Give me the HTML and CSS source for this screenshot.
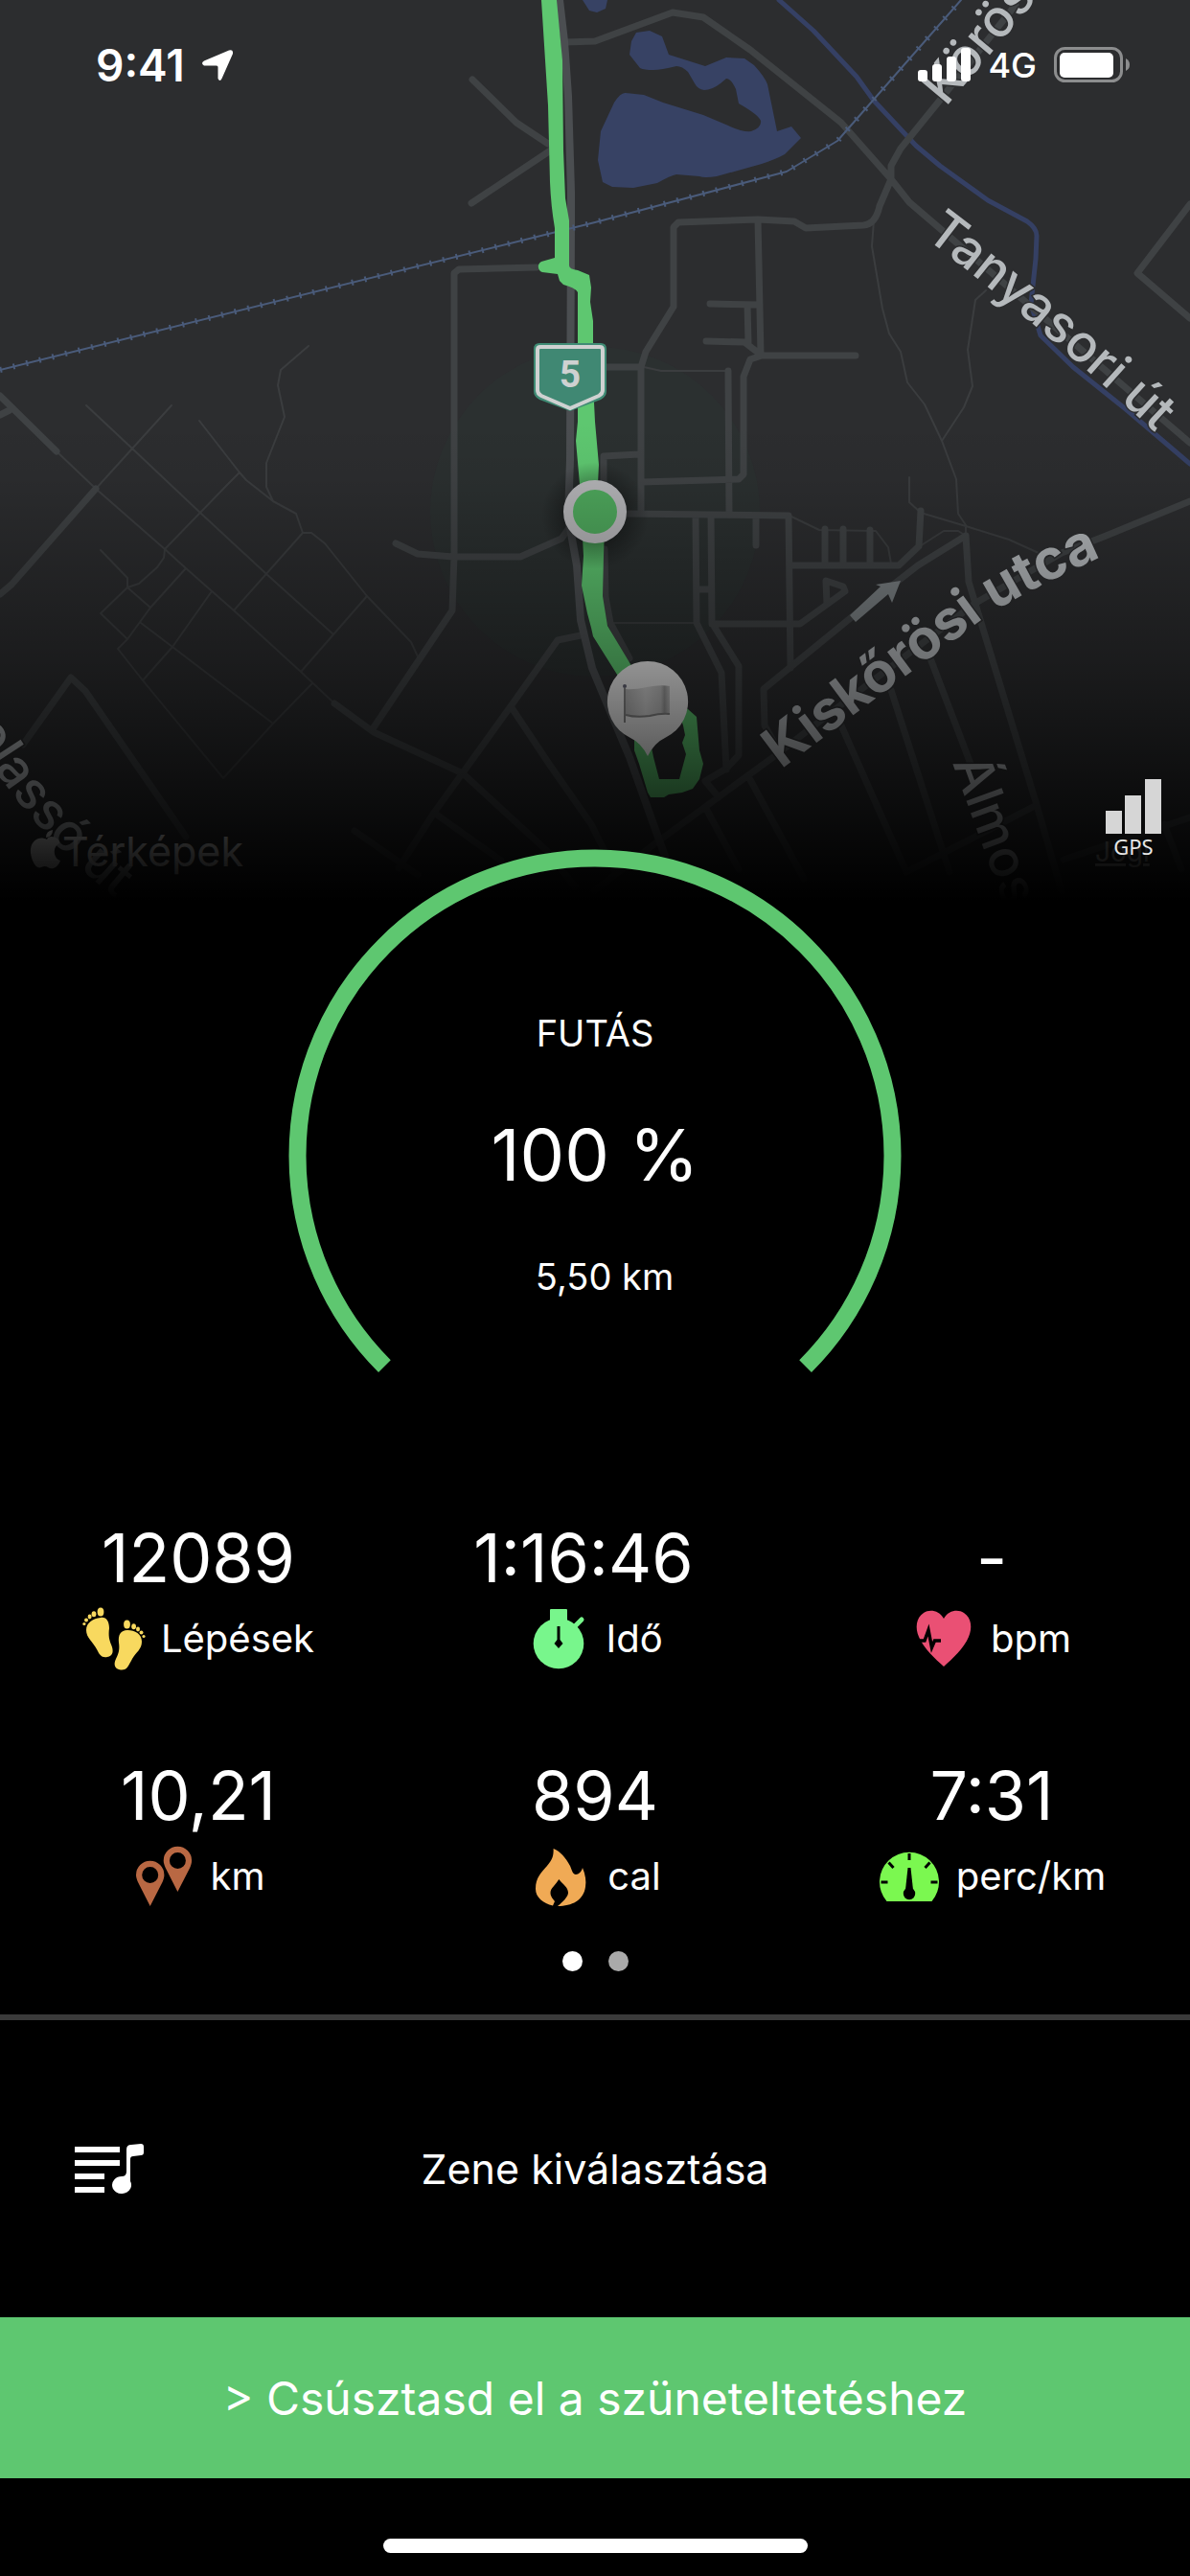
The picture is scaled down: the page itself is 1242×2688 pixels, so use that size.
FILE: index.html
```html
<!DOCTYPE html>
<html lang="hu">
<head>
	<meta charset="utf-8">
	<meta name="viewport" content="width=device-width, initial-scale=1">
	<title>Futás</title>
	<link rel="stylesheet" href="styles.css">
</head>
<body>
	<header class="map">
		<svg class="map-canvas" viewBox="0 0 1242 946" aria-hidden="true">
			<defs>
				<linearGradient id="fade" gradientUnits="userSpaceOnUse" x1="0" y1="440" x2="0" y2="940">
					<stop offset="0" stop-color="#000" stop-opacity="0"/>
					<stop offset=".12" stop-color="#000" stop-opacity=".05"/>
					<stop offset=".32" stop-color="#000" stop-opacity=".23"/>
					<stop offset=".5" stop-color="#000" stop-opacity=".39"/>
					<stop offset=".66" stop-color="#000" stop-opacity=".57"/>
					<stop offset=".76" stop-color="#000" stop-opacity=".69"/>
					<stop offset=".84" stop-color="#000" stop-opacity=".79"/>
					<stop offset=".9" stop-color="#000" stop-opacity=".87"/>
					<stop offset="1" stop-color="#000"/>
				</linearGradient>
				<linearGradient id="flag" x1="0" y1="0" x2="1" y2="0">
					<stop offset="0" stop-color="#b8b8b8"/>
					<stop offset=".45" stop-color="#d8d8d8"/>
					<stop offset=".8" stop-color="#c4c4c4"/>
					<stop offset=".88" stop-color="#a0a0a0"/>
					<stop offset="1" stop-color="#c8c8c8"/>
				</linearGradient>
				<radialGradient id="shadow">
					<stop offset=".5" stop-color="#000" stop-opacity=".35"/>
					<stop offset="1" stop-color="#000" stop-opacity="0"/>
				</radialGradient>
				<path id="street-koros" d="M987 112L1117 -43"/>
				<path id="street-tanya" d="M964 247Q1100 350 1236 480"/>
				<path id="street-kis" d="M815 803Q925 720 1027 645Q1085 607 1190 564"/>
				<path id="street-almos" d="M994 796L1052 955"/>
				<path id="street-left" d="M-30 762Q30 872 150 960"/>
			</defs>

			<rect class="land" width="1242" height="946"/>
			<circle class="accuracy" cx="621" cy="534" r="172"/>

			<!-- water -->
			<path class="water" d="M608 0L615 11L623 13L632 9L634 0Z"/>
			<path class="water" d="M653 97L672 99L692 107L734 120L760 131Q775 138 784 137Q795 133 794 126Q792 120 771 108L768 93Q763 82 758 82L752 87Q743 94 735 94Q728 93 725 87L718 75Q712 69 706 69Q690 73 682 73Q672 73 668 71L657 57L659 43L664 34L678 32L691 38L698 57L736 69L758 60L777 61L787 68Q798 80 801 88L811 137L826 132L836 144L819 161Q810 166 795 171L748 184Q735 186 730 184L706 182Q700 183 686 191L661 196L639 195L629 190L624 167L627 137L641 107Q648 96 653 97Z"/>
			<path class="canal" d="M813 0L849 32L894 80L912 105L956 152L981 173L1031 209L1072 231Q1082 238 1082 246L1081 270L1076 317L1086 350L1120 383L1175 427L1242 484"/>

			<!-- paths -->
			<path class="trail" d="M59 471L100 510L172 573L194 593L244 637L314 701L349 734M100 510L179 423M90 423L138 468L209 535L277 598L348 662M322 361L293 386L290 402L297 435L278 483V508L285 523M208 439L250 493L257 501L285 523L309 536L316 556H325L339 567L383 622L429 670L436 685M250 493L238 505L172 573L171 582L164 592L145 609L133 613L105 640L133 667L123 677L149 710L233 812L285 755L326 713M105 574L133 603V613L157 634M194 593L157 634L133 667M147 650L180 675L285 755M221 617L180 675L149 710M316 556L244 637M383 622L314 701"/>
			<path class="trail" d="M912 230L910 257L921 322L928 348L940 367L947 399L965 422L983 460L998 500L1000 536L1008 548V559M1029 303L1018 313L1010 365L1015 403L1006 425L983 460M672 383L690 387H760M949 498V524L961 535L1008 549L1053 563L1084 577M824 538L855 553L914 554L927 571L930 588M960 570L985 554H1000L1008 559M633 650H725"/>

			<!-- streets -->
			<path class="street" d="M493 83L539 128L572 150M576 156L492 212M560 279L479 281L474 285V580L472 637L388 762M413 567L436 578L473 581H543L586 562L596 548M349 734L390 764L483 807L570 887L600 925M606 663L582 668L533 737L453 848L416 906M533 737L573 797L617 860L642 910M453 848L523 898M370 867L436 913M0 413L59 471M0 433L10 428M100 510L12 610L0 620M24 777L74 707L89 721L194 873"/>
			<path class="street" d="M590 44L621 43L702 13L734 18L783 52L878 128L930 187L949 211L977 235L1242 462M1060 5L979 107L940 155L930 173V187L918 215Q914 234 901 235L841 238L829 231L791 229L708 232L703 237V320L674 367L669 383V535M633 383H669M791 229L794 370M741 317L793 318M780 318L781 357M737 356L777 357L795 371H893M795 371L783 375L776 393V495L771 500L670 503M760 387L761 537M667 474L630 476V520"/>
			<path class="street" d="M653 536L823 538L825 697M726 538L727 650L753 702L758 803M742 538L743 650L771 695V788L758 802L736 815L750 832M727 615H742M789 538V569M743 651H835L882 617L880 612L862 606L863 630M825 590H938L959 570L961 533M861 552V590M880 552V590M908 553V590M1008 559L958 590L890 643L797 719L798 757L807 773M1008 559L1011 607L1082 840L1108 930M1242 523L1152 560L1108 577L1017 630L898 720L807 790L736 842L680 883L620 930M781 810L839 917M878 757L946 910M930 720L991 910M971 687L1013 797M1082 840L946 910M736 842L771 907M1215 860L1233 907M1242 853L1110 897M1242 213L1187 285L1242 332M631 573L632 623L637 650L657 687"/>
			<path class="road" d="M584 0L589 43L593 100L596 200V233L595 480L593 540L602 590L606 647L618 697L633 733L657 790L682 860L700 910"/>

			<!-- railway -->
			<path class="rail" d="M0 386L621 232L821 179L874 147L1003 0"/>
			<path class="rail-ties" d="M0 386L621 232L821 179L874 147L1003 0"/>

			<path class="one-way" d="M887 642L919 612L914 610L940 606L931 629L927 620L893 649Z"/>

			<text class="street-name"><textPath href="#street-koros">Körös</textPath></text>
			<text class="street-name"><textPath href="#street-tanya">Tanyasori út</textPath></text>
			<text class="street-name major"><textPath href="#street-kis">Kiskőrösi utca</textPath></text>
			<text class="street-name"><textPath href="#street-almos">Álmos</textPath></text>
			<text class="street-name"><textPath href="#street-left">olassó út</textPath></text>

			<!-- the run -->
			<path class="run" d="M565 0H581L587 63L588 157L590 207L594 230V277Q594 281 603 282L615 287L617 300L616 315L619 335V400L621 440L625 485L624 505L631 550L630 580L629 622L634 653L658 693L680 730L646 707L619 664L617 655L613 640L607 611L609 580L605 505L601 460L603 440V305Q600 300 588 297L584 293L582 286L566 284A6 6 0 0 1 565 273L579 269V238Q575 215 574 190L572 110Z"/>
			<path class="run" fill-rule="evenodd" d="M700 728L718 740L727 748L730 783L734 797L730 813L723 823L712 827L698 829L693 832H679L676 827L667 797L662 783V760L690 745ZM709 745L713 757L715 767L712 775L716 787L709 813H688L682 790L678 770Z"/>

			<path class="shield-edge" d="M563 358H627Q633 358 633 364V408Q633 414 627 417L595 429L563 417Q557 414 557 408V364Q557 358 563 358Z"/>
			<path class="shield" d="M564 362H626Q629 362 629 365V407Q629 411 625 413L595 426L565 413Q561 411 561 407V365Q561 362 564 362Z"/>
			<text class="shield-number" x="595" y="404">5</text>

			<circle cx="621" cy="538" r="56" fill="url(#shadow)"/>
			<circle class="here" cx="621" cy="534" r="28"/>

			<path class="pin" d="M676 690A42 42 0 0 1 694 770Q683 775 676 789Q669 775 658 770A42 42 0 0 1 676 690Z"/>
			<path fill="url(#flag)" d="M653 719Q662 720 675 717Q690 714 699 716V745Q690 744 678 747Q664 749 653 746Z"/>
			<path class="flag-hem" d="M653 746Q664 749 678 747Q690 744 699 745"/>
			<path class="flag-pole" d="M652 718V754"/>
			<circle cx="652" cy="716" r="2" fill="#667"/>

			<path class="credit-mark" d="M49 876C51 870 63 874 62 880C54 884 56 896 63 898C60 906 54 908 50 905Q47 903 43 905C37 908 31 894 32 886C33 876 42 872 49 876ZM48 874Q48 867 55 866Q55 873 48 874Z"/>
			<text class="credit" x="65" y="904">Térképek</text>
			<text class="legal" x="1143" y="899">Jogi</text>

			<rect width="1242" height="946" fill="url(#fade)"/>
		</svg>

		<div class="status">
			<div class="status-side">
				<span class="time">9:41</span>
				<svg width="32" height="32" viewBox="0 0 32 32"><path fill="#fff" d="M28 .5Q32.500 -1 32 4L20.500 30Q18.500 34 16.500 30V18Q16.500 16.500 15 16.500H2Q-2 14 2 11.500Z"/></svg>
			</div>
			<div class="status-side">
				<svg width="55" height="36" viewBox="0 0 55 36" fill="#fff">
					<rect y="23" width="10" height="12" rx="3"/>
					<rect x="15" y="17" width="10" height="18" rx="3"/>
					<rect x="30" y="9" width="10" height="26" rx="3"/>
					<rect x="45" width="10" height="35" rx="3"/>
				</svg>
				<span class="network">4G</span>
				<svg width="80" height="38" viewBox="0 0 80 38">
					<rect x="1.500" y="1.500" width="69" height="34" rx="10" fill="none" stroke="#8c8d8e" stroke-width="3"/>
					<rect x="6" y="6" width="56" height="26" rx="5" fill="#fff"/>
					<path d="M75 12Q79 14 79 18.500T75 25Z" fill="#8c8d8e"/>
				</svg>
			</div>
		</div>

		<div class="gps">
			<svg width="58" height="57" viewBox="0 0 58 57" fill="#d6d6d6">
				<rect y="33" width="17" height="24"/>
				<rect x="20" y="17" width="17" height="40"/>
				<rect x="41" width="17" height="57"/>
			</svg>
			<span>GPS</span>
		</div>
	</header>

	<main>
		<section class="goal">
			<svg class="goal-ring" viewBox="0 0 640 546" aria-hidden="true">
				<path d="M100.400 539.600A310.500 310.500 0 1 1 539.600 539.600"/>
			</svg>
			<div class="goal-text">
				<h1 class="goal-label">FUTÁS</h1>
				<p class="goal-value">100 %</p>
				<p class="goal-label goal-distance">5,50 km</p>
			</div>
		</section>

		<section class="stats">
			<div class="stat">
				<span class="value">12089</span>
				<span class="label">
					<svg class="icon" viewBox="0 0 66 66" fill="#f8d95f">
						<ellipse cx="19" cy="5" rx="3.400" ry="4.500"/>
						<ellipse cx="12" cy="7.200" rx="2.400" ry="3"/>
						<ellipse cx="7.600" cy="10" rx="2" ry="2.400"/>
						<circle cx="4" cy="13.500" r="2"/>
						<circle cx="1.900" cy="17.500" r="1.600"/>
						<path d="M19 11C25 10 28 15 28 22C27 30 28 34 30 39C33 46 32 51 26 52C20 53 18 50 15 44C11 36 4 32 4 24C4 16 11 12 19 11Z"/>
						<ellipse cx="46.500" cy="18" rx="3.400" ry="4.500"/>
						<ellipse cx="53.600" cy="20.300" rx="2.400" ry="3"/>
						<ellipse cx="58" cy="23" rx="2" ry="2.400"/>
						<circle cx="61.500" cy="26.500" r="2"/>
						<circle cx="64" cy="30.500" r="1.600"/>
						<path d="M47 24C55 24 62 28 62 36C62 44 56 47 52 54C48 61 47 66 40 65.500C34 65 32 60 35 54C38 48 39 44 38 37C37 29 40 24 47 24Z"/>
					</svg>
					Lépések
				</span>
			</div>
			<div class="stat">
				<span class="value duration">1:16:46</span>
				<span class="label">
					<svg class="icon" viewBox="0 0 66 66" fill="#78f68c">
						<path d="M25 2H41Q42 2 42 3V14H24V3Q24 2 25 2Z"/>
						<circle cx="33" cy="38" r="26.300"/>
						<path d="M50 20L57 13" stroke="#78f68c" stroke-width="5" stroke-linecap="round"/>
						<path fill="#000" d="M31.500 20H34.500V34L37.500 38L33 43L28.500 38L31.500 34Z"/>
					</svg>
					Idő
				</span>
			</div>
			<div class="stat">
				<span class="value">-</span>
				<span class="label">
					<svg class="icon" viewBox="0 0 66 66">
						<path fill="#ea5074" d="M33 12C38 3 48 2 54 6C62 11 63 22 59 31C54 43 42 54 33 62C24 54 12 43 7 31C3 22 4 11 12 6C18 2 28 3 33 12Z"/>
						<path fill="none" stroke="#000" stroke-width="3.500" d="M6 35H13L17 24L20.500 42L23.500 35H30"/>
					</svg>
					bpm
				</span>
			</div>
			<div class="stat">
				<span class="value">10,21</span>
				<span class="label">
					<svg class="icon" viewBox="0 0 66 66" fill="#b96843" fill-rule="evenodd">
						<path d="M18.700 64L6 39C5 36.500 4 34 4 31.500A14.700 14.700 0 0 1 33.400 31.500C33.400 34 32.500 36.500 31.500 39ZM18.700 23A8.500 8.500 0 1 0 18.700 40A8.500 8.500 0 1 0 18.700 23Z"/>
						<path d="M47.400 49L34.700 24C33.700 21.500 32.700 19 32.700 16.500A14.700 14.700 0 0 1 62.100 16.500C62.100 19 61.200 21.500 60.200 24ZM47.400 8A8.500 8.500 0 1 0 47.400 25A8.500 8.500 0 1 0 47.400 8Z"/>
					</svg>
					km
				</span>
			</div>
			<div class="stat">
				<span class="value">894</span>
				<span class="label">
					<svg class="icon" viewBox="0 0 66 66" fill="#f0aa55">
						<path d="M25.600 4C33 7 38 13 43 22C45 27 46 31 49 31C52 31 55 28 56 24C59 31 60 38 59 44C57 58 45 64 30 64C36 59 41 54 41 50C41 44 35 41 31.300 36C28 42 22.500 45 22.500 50C22.500 54 25 56 27 59L25 63.500C15 61 7 55 7 46C7 34 13 29 19 22C24 16 26 12 25.600 4Z"/>
					</svg>
					cal
				</span>
			</div>
			<div class="stat">
				<span class="value">7:31</span>
				<span class="label">
					<svg class="icon" viewBox="0 0 66 66">
						<path fill="#7bf850" d="M9.500 59A31 31 0 1 1 56.500 59Z"/>
						<path stroke="#000" stroke-width="3" d="M33 9V16M3.500 39H10.500M55.500 39H62.500M11.500 18.500L16.500 24M54.500 18.500L49.500 24"/>
						<path d="M31.500 24H34.500L37 47H29Z"/>
						<circle cx="33" cy="51" r="6.200"/>
					</svg>
					perc/km
				</span>
			</div>
		</section>

		<nav class="pages">
			<button class="page-dot active" aria-label="1. oldal"></button>
			<button class="page-dot" aria-label="2. oldal"></button>
		</nav>
	</main>

	<button class="music">
		<svg width="72" height="52" viewBox="0 0 72 52" fill="#fff">
			<path d="M0 3H47V9H0ZM0 17H47V23H0ZM0 31H31V37H0ZM0 45H31V51H0Z"/>
			<path d="M54 6Q54 1 59 1L69 0Q72 0 72 3V9Q72 12 69 12L61 13Q58 13 58 16V39A10 9 0 1 1 49 34Q54 34 54 29Z"/>
		</svg>
		<span>Zene kiválasztása</span>
	</button>
	<button class="slide">&gt; Csúsztasd el a szüneteltetéshez</button>

	<footer class="home"><div class="home-bar"></div></footer>
</body>
</html>
```
FILE: styles.css
```css
* {
	box-sizing: border-box;
}
body {
	margin: 0;
	min-height: 100vh;
	display: flex;
	flex-direction: column;
	background: #000;
	color: #fff;
	font-family: Inter, "Liberation Sans", sans-serif;
}
svg {
	display: block;
	flex: none;
}
button {
	padding: 0;
	border: none;
	border-radius: 0;
	color: inherit;
	font-family: inherit;
	cursor: pointer;
}
h1, p {
	margin: 0;
	font-weight: 400;
}

/* map */
.map {
	position: relative;
}
.map-canvas {
	width: 100%;
	height: auto;
}
.land {
	fill: #2c2d2f;
}
.accuracy {
	fill: #2c3232;
	opacity: .6;
}
.water {
	fill: #374264;
}
.canal, .trail, .street, .road, .rail, .rail-ties {
	fill: none;
	stroke-linecap: round;
	stroke-linejoin: round;
}
.canal {
	stroke: #354064;
	stroke-width: 5;
}
.trail {
	stroke: #3b3d3f;
	stroke-width: 2;
}
.street {
	stroke: #3f4244;
	stroke-width: 7;
}
.road {
	stroke: #4b4e51;
	stroke-width: 8;
}
.rail {
	stroke: #4a5b7a;
	stroke-width: 2;
}
.rail-ties {
	stroke: #4a5b7a;
	stroke-width: 6;
	stroke-linecap: butt;
	stroke-dasharray: 2 12;
}
.one-way {
	fill: #7c8285;
}
.street-name {
	font-size: 54px;
	font-weight: 500;
	fill: #b5b9bc;
	stroke: #2c2d2f;
	stroke-width: 3px;
	paint-order: stroke;
}
.major {
	font-size: 58px;
	font-weight: 700;
}
.run {
	fill: #5ec770;
}
.shield-edge {
	fill: #3f8b74;
}
.shield {
	fill: #408873;
	stroke: #cfd1d1;
	stroke-width: 4px;
}
.shield-number {
	font-family: Roboto, sans-serif;
	font-size: 39px;
	font-weight: 700;
	text-anchor: middle;
	fill: #cfd1d1;
}
.here {
	fill: #4ea75c;
	stroke: #b4b4b7;
	stroke-width: 10px;
}
.pin {
	fill: #f0f0f0;
}
.flag-hem, .flag-pole {
	fill: none;
	stroke: #888;
	stroke-width: 2px;
}
.credit, .credit-mark {
	fill: #f0f0f0;
}
.credit {
	font-size: 43px;
}
.legal {
	font-size: 28px;
	fill: #aaa;
	text-decoration: underline;
}

/* status bar */
.status {
	position: absolute;
	top: 0;
	left: 0;
	right: 0;
	padding: 40px 62px 0 100px;
	display: flex;
	justify-content: space-between;
}
.status-side {
	display: flex;
	align-items: center;
	gap: 18px;
	height: 56px;
}
.time {
	font-size: 46px;
	font-weight: 600;
}
.network {
	font-size: 36px;
	font-weight: 500;
}
.gps {
	position: absolute;
	right: 30px;
	bottom: 50px;
	display: flex;
	flex-direction: column;
	align-items: center;
	color: #e6e6e6;
	font: 22px/26px "Noto Sans", sans-serif;
}

/* goal ring */
.goal {
	position: relative;
	width: 640px;
	max-width: 90%;
	margin: -60px auto 0;
	display: grid;
}
.goal-ring {
	grid-area: 1 / 1;
	width: 100%;
	fill: none;
	stroke: #5ec770;
	stroke-width: 18px;
}
.goal-text {
	grid-area: 1 / 1;
	padding-top: 170px;
	display: flex;
	flex-direction: column;
	align-items: center;
	gap: 61px;
}
.goal-label {
	font-size: 38px;
	line-height: 44px;
}
.goal-value {
	font-size: 74px;
	line-height: 88px;
}
.goal-distance {
	padding-left: 20px;
}

/* stats */
.stats {
	margin-top: 152px;
	display: grid;
	grid-template-columns: repeat(3, 1fr);
	row-gap: 89px;
}
.stat {
	display: flex;
	flex-direction: column;
	align-items: center;
	gap: 9px;
}
.value {
	font-size: 70px;
	line-height: 84px;
}
.duration {
	padding-right: 24px;
}
.label {
	display: flex;
	gap: 16px;
	font-size: 40px;
	line-height: 66px;
}
.icon {
	width: 66px;
	height: 66px;
}

.pages {
	margin: 45px 0;
	display: flex;
	justify-content: center;
	gap: 27px;
}
.page-dot {
	width: 21px;
	height: 21px;
	border-radius: 50%;
	background: #aaa;
}
.page-dot.active {
	background: #fff;
}

/* bottom controls */
.music {
	flex: 1;
	min-height: 200px;
	padding: 0 78px;
	border-top: 6px solid #3a3a3a;
	background: none;
	display: grid;
	grid-template-columns: 1fr auto 1fr;
	align-items: center;
	font-size: 43px;
}
.slide {
	height: 168px;
	background: #5ec770;
	font-size: 48px;
}
.home {
	padding: 63px 0 24px;
}
.home-bar {
	width: 443px;
	height: 15px;
	margin: 0 auto;
	border-radius: 8px;
	background: #fff;
}
```
